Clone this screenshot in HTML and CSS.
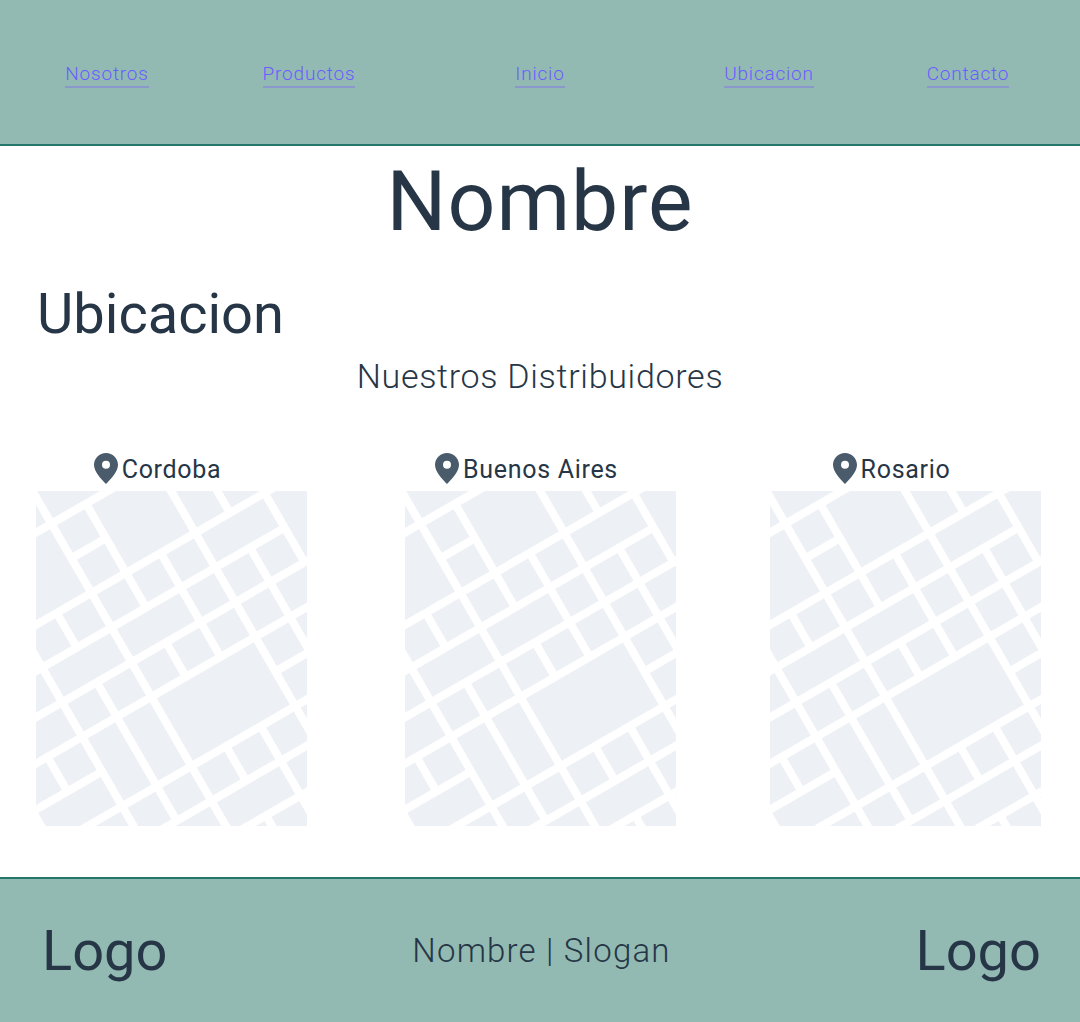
FILE: index.html
```html
<!DOCTYPE html>
<html lang="en">
<head>
    <meta charset="UTF-8">
    <meta name="viewport" content="width=device-width, initial-scale=1.0">
    <title>Ubicacion</title>
    <link rel="stylesheet" href="styles.css">
</head>
<body>

    <svg class="defs" width="0" height="0">
        <symbol id="street-map" viewBox="0 0 271 335">
            <rect width="271" height="335" fill="#edf0f5"/>
            <g transform="rotate(-30)" stroke="#fff" stroke-width="8" fill="none">
                <path d="M-100 36H100 M-100 116H300 M-3 76H37 M-100 156H197 M-200 196H400 M-200 236H400 M-300 276H-83 M117 276H400 M-200 316H400 M-200 356H400 M-200 396H400"/>
                <path d="M-163 276V500 M-123 236V276 M-83 100V500 M-43 116V156 M-43 196V356 M-3 -50V500 M37 36V156 M37 196V236 M37 316V356 M37 396V500 M77 116V236 M77 316V500 M117 -100V500 M157 -100V116 M157 156V500 M197 -100V196"/>
            </g>
        </symbol>
        <symbol id="pin" viewBox="0 0 24 31">
            <path fill="#4a5b6c" fill-rule="evenodd" d="M12 0C5.4 0 0 5.3 0 11.8 0 18.500 7 26 12 31c5-5 12-12.500 12-19.200C24 5.300 18.600 0 12 0zm0 7.800a4 4 0 1 1 0 8 4 4 0 0 1 0-8z"/>
        </symbol>
    </svg>

    <header class="top-nav">
        <a href="#">Nosotros</a>
        <a href="#">Productos</a>
        <a href="#">Inicio</a>
        <a href="#">Ubicacion</a>
        <a href="#">Contacto</a>
    </header>

    <main>
        <h1>Nombre</h1>
        <h2>Ubicacion</h2>
        <h3>Nuestros Distribuidores</h3>

        <div class="cities">
            <div class="city">
                <div class="city-label"><svg class="pin"><use href="#pin"/></svg>Cordoba</div>
                <svg class="map"><use href="#street-map"/></svg>
            </div>
            <div class="city">
                <div class="city-label"><svg class="pin"><use href="#pin"/></svg>Buenos Aires</div>
                <svg class="map"><use href="#street-map"/></svg>
            </div>
            <div class="city">
                <div class="city-label"><svg class="pin"><use href="#pin"/></svg>Rosario</div>
                <svg class="map"><use href="#street-map"/></svg>
            </div>
        </div>
    </main>

    <footer class="bottom-bar">
        <span class="logo">Logo</span>
        <span class="slogan">Nombre | Slogan</span>
        <span class="logo">Logo</span>
    </footer>

</body>
</html>
```

FILE: styles.css
```css
body {
    margin: 0;
    background-color: #fff;
    color: #263646;
    font-family: Roboto, 'Liberation Sans', sans-serif;
    font-weight: 300;
}
.defs {
    display: block;
    height: 0;
}
.top-nav {
    display: grid;
    grid-template-columns: 214px 190px 272px 186px 212px;
    align-items: center;
    justify-items: center;
    height: 138px;
    padding-top: 6px;
    background-color: #92bab2;
    border-bottom: 2px solid #22766a;
}
.top-nav a {
    color: #6a5cff;
    font-size: 19px;
    font-weight: 300;
    letter-spacing: 0.8px;
    line-height: 24px;
    text-decoration: none;
    border-bottom: 2px solid #8a98cc;
}
h1 {
    margin: 0;
    height: 132px;
    font-size: 84px;
    font-weight: 400;
    letter-spacing: 1px;
    line-height: 112px;
    text-align: center;
}
h2 {
    margin: 0;
    padding-left: 37px;
    height: 78px;
    font-size: 56px;
    font-weight: 400;
    line-height: 72px;
}
h3 {
    margin: 0;
    height: 94px;
    font-size: 34px;
    font-weight: 300;
    letter-spacing: 0.7px;
    line-height: 40px;
    text-align: center;
}
.cities {
    display: grid;
    grid-template-columns: 369px 365px 271px;
    padding-left: 36px;
}
.city {
    width: 271px;
}
.city-label {
    display: flex;
    align-items: center;
    justify-content: center;
    gap: 4px;
    height: 39px;
    padding: 0 28px 2px 0;
    font-size: 25px;
    font-weight: 400;
    letter-spacing: 0.7px;
}
.pin {
    width: 24px;
    height: 31px;
    margin-bottom: 3px;
}
.map {
    display: block;
    width: 271px;
    height: 335px;
}
.bottom-bar {
    display: flex;
    align-items: center;
    justify-content: space-between;
    margin-top: 51px;
    padding: 0 39px 0 42px;
    height: 143px;
    background-color: #92bab2;
    border-top: 2px solid #22766a;
}
.logo {
    font-size: 56px;
    font-weight: 400;
}
.slogan {
    font-size: 33px;
    letter-spacing: 1.2px;
}
```
